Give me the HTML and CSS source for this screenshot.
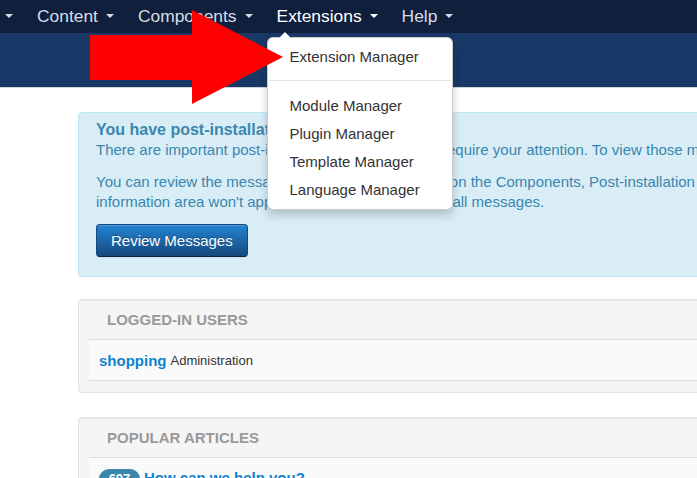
FILE: index.html
```html
<!DOCTYPE html>
<html lang="en">
<head>
<meta charset="utf-8">
<title>Control Panel</title>
<link rel="stylesheet" href="styles.css">
</head>
<body>
<nav class="topbar">
  <ul class="nav">
    <li class="nav-item first"><a class="nav-link" href="#"><span class="caret"></span></a></li>
    <li class="nav-item"><a class="nav-link" href="#">Content<span class="caret"></span></a></li>
    <li class="nav-item"><a class="nav-link" href="#">Components<span class="caret"></span></a></li>
    <li class="nav-item open">
      <a class="nav-link active" href="#">Extensions<span class="caret"></span></a>
      <ul class="dropdown">
        <li><a href="#">Extension Manager</a></li>
        <li class="divider"></li>
        <li><a href="#">Module Manager</a></li>
        <li><a href="#">Plugin Manager</a></li>
        <li><a href="#">Template Manager</a></li>
        <li><a href="#">Language Manager</a></li>
      </ul>
    </li>
    <li class="nav-item"><a class="nav-link" href="#">Help<span class="caret"></span></a></li>
  </ul>
</nav>
<header class="subhead"></header>
<main class="content">
  <div class="alert">
    <h4 class="alert-heading">You have post-installation messages</h4>
    <p>There are important post-installation messages that require your attention. To view those messages please click on the Review Messages button below.</p>
    <p>You can review the messages at any time by clicking on the Components, Post-installation Messages menu item of your site's back-end. This<br>information area won't appear when you have hidden all messages.</p>
    <button class="btn-primary">Review Messages</button>
  </div>
  <section class="well">
    <h2 class="module-title">Logged-in Users</h2>
    <div class="rows">
      <div class="row"><a class="user" href="#">shopping</a> <span class="small">Administration</span></div>
    </div>
  </section>
  <section class="well">
    <h2 class="module-title">Popular Articles</h2>
    <div class="rows">
      <div class="row"><span class="badge">607</span> <a class="article" href="#">How can we help you?</a></div>
    </div>
  </section>
</main>
<svg class="arrow" width="697" height="478" viewBox="0 0 697 478" aria-hidden="true">
  <polygon points="90,35 192,35 192,10 283,57 192,104 192,80 90,80" fill="#ff0000"/>
</svg>
</body>
</html>
```
FILE: styles.css
```css
html, body {
  margin: 0;
  padding: 0;
}
body {
  width: 697px;
  height: 478px;
  overflow: hidden;
  position: relative;
  font-family: "Liberation Sans", Arial, sans-serif;
  background: #fff;
  color: #333;
}
.topbar {
  height: 33px;
  background: #0f1f3c;
  position: relative;
  z-index: 5;
}
.nav {
  list-style: none;
  margin: 0 0 0 -7px;
  padding: 0;
  display: flex;
  height: 33px;
}
.nav-item {
  position: relative;
}
.nav-link {
  display: block;
  padding: 0 12px;
  line-height: 33px;
  font-size: 17.4px;
  color: #d7dce4;
  text-decoration: none;
  white-space: nowrap;
}
.nav-link.active {
  color: #ffffff;
}
.caret {
  display: inline-block;
  width: 0;
  height: 0;
  margin-left: 8px;
  border-top: 4px solid currentColor;
  border-left: 4px solid transparent;
  border-right: 4px solid transparent;
  vertical-align: middle;
  position: relative;
  top: -1px;
}
.first .caret {
  margin-left: 0;
}
.dropdown {
  position: absolute;
  top: 37px;
  left: 2px;
  width: 184px;
  margin: 0;
  padding: 5px 0 5px;
  list-style: none;
  background: #fff;
  border: 1px solid rgba(0, 0, 0, 0.2);
  border-radius: 6px;
  box-shadow: 0 5px 10px rgba(0, 0, 0, 0.2);
}
.dropdown::before {
  content: "";
  position: absolute;
  top: -7px;
  left: 10px;
  border-left: 7px solid transparent;
  border-right: 7px solid transparent;
  border-bottom: 7px solid rgba(0, 0, 0, 0.2);
}
.dropdown::after {
  content: "";
  position: absolute;
  top: -6px;
  left: 11px;
  border-left: 6px solid transparent;
  border-right: 6px solid transparent;
  border-bottom: 6px solid #fff;
}
.dropdown a {
  display: block;
  padding: 0 22px;
  line-height: 28px;
  font-size: 15px;
  color: #333;
  text-decoration: none;
  white-space: nowrap;
}
.dropdown .divider {
  height: 1px;
  margin: 9px 1px 10px;
  background: #e5e5e5;
  border-bottom: 1px solid #fff;
}
.subhead {
  height: 54px;
  background: #1a3867;
  border-bottom: 1px solid #cfd4db;
}
.content {
  width: 1000px;
  padding: 24px 0 0 78px;
}
.alert {
  background: #d9edf7;
  border: 1px solid #bce8f1;
  border-radius: 4px;
  color: #3a87ad;
  padding: 7px 17px 19px;
  margin-bottom: 22px;
}
.alert-heading {
  margin: 0;
  font-size: 16px;
  line-height: 20px;
  font-weight: bold;
  color: #3a87ad;
}
.alert p {
  margin: 0 0 12px;
  font-size: 15px;
  line-height: 20px;
  white-space: nowrap;
}
.btn-primary {
  display: block;
  height: 33px;
  padding: 0 14px;
  font-family: inherit;
  font-size: 15px;
  color: #fff;
  text-shadow: 0 -1px 0 rgba(0, 0, 0, 0.25);
  background-color: #1d6cb0;
  background-image: linear-gradient(to bottom, #2384d3, #15497c);
  border: 1px solid #15497c;
  border-bottom-color: #0a2440;
  border-radius: 4px;
  box-shadow: inset 0 1px 0 rgba(255, 255, 255, 0.2), 0 1px 2px rgba(0, 0, 0, 0.05);
}
.well {
  background: #f5f5f5;
  border: 1px solid #e3e3e3;
  border-radius: 4px;
  margin-bottom: 24px;
  padding: 0 0 11px;
  box-shadow: inset 0 1px 1px rgba(0, 0, 0, 0.05);
}
.module-title {
  margin: 0;
  padding: 10px 28px 9px;
  font-size: 15px;
  line-height: 20px;
  font-weight: bold;
  text-transform: uppercase;
  color: #999;
}
.rows {
  margin-left: 10px;
  border-top: 1px solid #dddddd;
}
.row {
  height: 40px;
  display: flex;
  align-items: center;
  gap: 4px;
  padding: 0 10px;
  background: #fafafa;
  border-bottom: 1px solid #dddddd;
  white-space: nowrap;
}
.user, .article {
  font-size: 15px;
  font-weight: bold;
  color: #0e83cd;
  text-decoration: none;
}
.small {
  font-size: 13px;
  color: #333;
}
.well:last-child .row {
  align-items: flex-start;
  padding-top: 11px;
}
.badge {
  display: inline-block;
  width: 41px;
  height: 20px;
  line-height: 20px;
  text-align: center;
  font-size: 13px;
  font-weight: bold;
  color: #fff;
  background: #3a87ad;
  border-radius: 10px;
}
.arrow {
  position: absolute;
  left: 0;
  top: 0;
  z-index: 10;
  pointer-events: none;
}
```
